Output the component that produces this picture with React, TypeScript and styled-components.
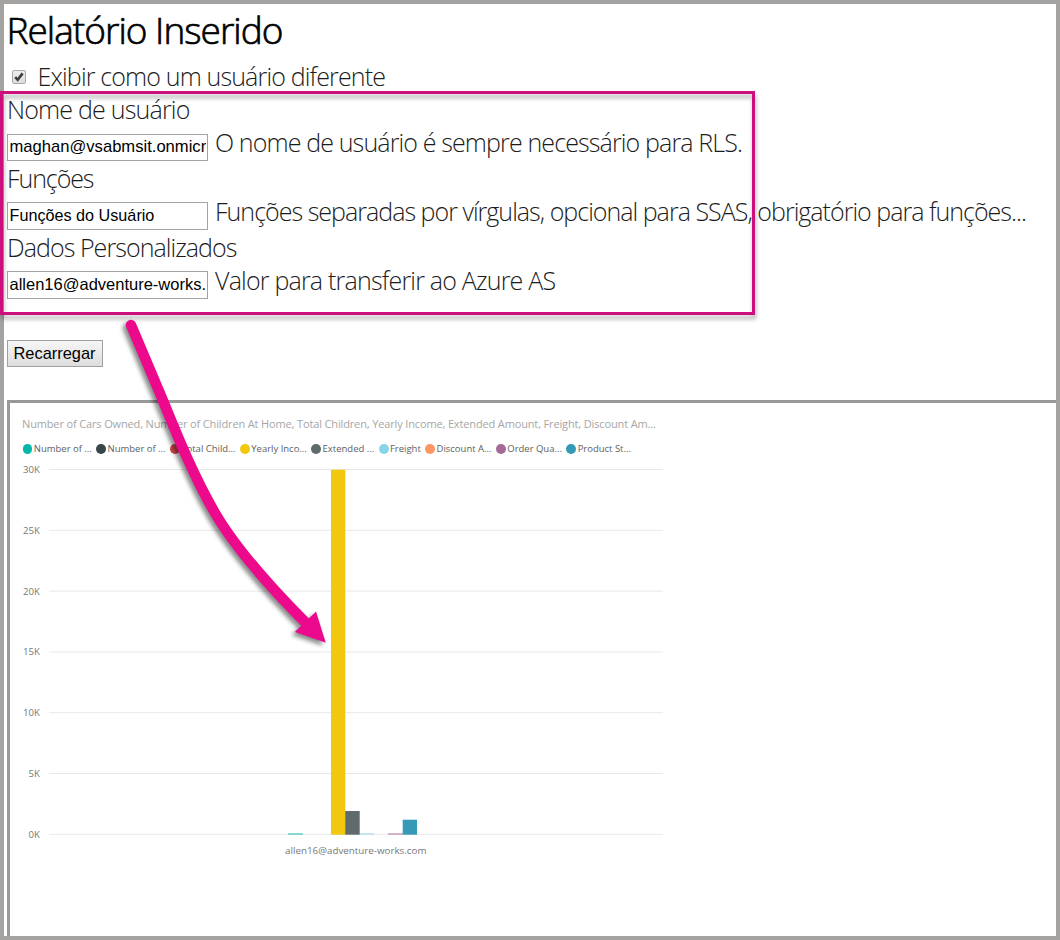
import React from "react";
import styled, { createGlobalStyle } from "styled-components";

const Global = createGlobalStyle`
  *, *::before, *::after { box-sizing: border-box; }
  body { margin: 0; background: #fff; font-family: "Open Sans", sans-serif; }
`;

const Page = styled.main`
  position: relative;
  display: flex;
  flex-direction: column;
  width: 1060px;
  height: 940px;
  padding-left: 3px;
  border: 4px solid #a4a3a2;
  color: #000;
`;

const Title = styled.h1`
  margin: 0 0 0 -0.5px;
  font-size: 37px;
  font-weight: 300;
  line-height: 51px;
  letter-spacing: -0.98px;
  white-space: nowrap;
  -webkit-text-stroke: 0.7px #000;
`;

const Label = styled.span<{ $tracking: number; $line: number }>`
  display: block;
  color: #1c1c1c;
  font-size: 25px;
  font-weight: 300;
  line-height: ${(p) => p.$line}px;
  letter-spacing: ${(p) => p.$tracking}px;
  white-space: nowrap;
`;

const CheckRow = styled.label`
  display: flex;
  align-items: flex-start;
  gap: 11.5px;
  height: 37px;
  padding: 5px 0 0 5px;
`;

const CheckBox = styled.span`
  display: flex;
  width: 14px;
  height: 14px;
  margin-top: 10px;
  border: 1px solid #a9a9a9;
  border-radius: 2px;
  background: linear-gradient(#ededed, #dcdcdc);
`;

const Field = styled.div`
  height: 69px;
`;

const FieldRow = styled.div`
  display: flex;
  align-items: flex-start;
  gap: 7px;
  height: 35px;
`;

const TextInput = styled.input<{ $size: number; $top: number }>`
  flex: none;
  width: 201px;
  height: ${(p) => 35 - p.$top}px;
  margin: ${(p) => p.$top}px 0 0;
  padding: 0 1px 2px 1.5px;
  border: 1px solid #a3a3a3;
  background: #fff;
  color: #000;
  font-family: "Liberation Sans", sans-serif;
  font-size: ${(p) => p.$size}px;
`;

const Reload = styled.button`
  width: 96px;
  height: 27px;
  margin: 41px 0 33px;
  padding: 0 1px 0 0;
  border: 1px solid #a0a0a0;
  border-radius: 0;
  background: linear-gradient(#f6f6f6, #dddddd);
  color: #000;
  font-family: "Liberation Sans", sans-serif;
  font-size: 16.4px;
`;

const ReportFrame = styled.section`
  flex: 1;
  padding: 13px 0 0 12px;
  border: solid #999;
  border-width: 3px 0 0 3px;
`;

const ChartTitle = styled.div`
  height: 16px;
  color: #a6a6a6;
  font-size: 11px;
  line-height: 16px;
  letter-spacing: -0.142px;
  white-space: nowrap;
`;

const Legend = styled.div`
  display: flex;
  gap: 4.6px;
  height: 14px;
  margin: 10px 0 -1px 0.6px;
`;

const LegendItem = styled.span`
  display: flex;
  align-items: center;
  gap: 1.4px;
  color: #5e5e5e;
  font-size: 9.5px;
  line-height: 14px;
  letter-spacing: -0.012px;
  white-space: nowrap;
`;

const Dot = styled.i<{ $color: string }>`
  width: 9.8px;
  height: 9.8px;
  border-radius: 50%;
  background: ${(p) => p.$color};
`;

const Plot = styled.svg`
  display: block;
  width: 650px;
  height: 410px;
  font-family: "Open Sans", sans-serif;
  fill: #777;
`;

const Highlight = styled.div`
  position: absolute;
  top: 87px;
  left: -4px;
  width: 755px;
  height: 224px;
  border: 3px solid #cc0f7d;
  filter: drop-shadow(1px 4px 2px rgba(0, 0, 0, 0.32));
  pointer-events: none;
`;

const Arrow = styled.svg`
  position: absolute;
  top: 306px;
  left: 96px;
  width: 250px;
  height: 350px;
  overflow: visible;
  filter: drop-shadow(-3px 3px 2px rgba(0, 0, 0, 0.45));
  pointer-events: none;
`;

const fields = [
  {
    label: "Nome de usuário", labelTracking: -0.8,
    value: "maghan@vsabmsit.onmicrosoft.com", size: 16.6, top: 8,
    hint: "O nome de usuário é sempre necessário para RLS.", hintTracking: -0.87,
  },
  {
    label: "Funções", labelTracking: -1.08,
    value: "Funções do Usuário", size: 16.2, top: 7,
    hint: "Funções separadas por vírgulas, opcional para SSAS, obrigatório para funções...", hintTracking: -0.98,
  },
  {
    label: "Dados Personalizados", labelTracking: -0.94,
    value: "allen16@adventure-works.com", size: 16.5, top: 7,
    hint: "Valor para transferir ao Azure AS", hintTracking: -0.8,
  },
];

const series = [
  { id: "cars", color: "#01b8aa", name: "Number of ..." },
  { id: "home", color: "#374649", name: "Number of ..." },
  { id: "children", color: "#d04a4a", name: "Total Child..." },
  { id: "income", color: "#f2c80f", name: "Yearly Inco..." },
  { id: "extended", color: "#5f6b6d", name: "Extended ..." },
  { id: "freight", color: "#8ad4eb", name: "Freight" },
  { id: "discount", color: "#fe9666", name: "Discount A..." },
  { id: "order", color: "#a66999", name: "Order Qua..." },
  { id: "product", color: "#3599b8", name: "Product St..." },
];

const ticks = ["30K", "25K", "20K", "15K", "10K", "5K", "0K"];

const bars = [
  { x: 288, w: 15, y: 833.2, color: "#01b8aa", opacity: 0.6 },
  { x: 360, w: 14, y: 833.2, color: "#8ad4eb", opacity: 0.6 },
  { x: 388, w: 15, y: 833.2, color: "#a66999", opacity: 0.6 },
  { x: 331, w: 14.3, y: 469.7, color: "#f2c80f", opacity: 1 },
  { x: 345.2, w: 14.5, y: 811, color: "#5f6b6d", opacity: 1 },
  { x: 402.7, w: 14.3, y: 819.7, color: "#3599b8", opacity: 1 },
];

export default function App() {
  return (
    <>
      <Global />
      <Page>
        <Title>Relatório Inserido</Title>
        <CheckRow>
          <CheckBox>
            <svg width="12" height="12" viewBox="0 0 12 12">
              <path d="M2.2 6.2 4.7 8.8 9.6 2.4" fill="none" stroke="#3c3c3c" strokeWidth="2.6" />
            </svg>
          </CheckBox>
          <Label $tracking={-0.85} $line={32}>Exibir como um usuário diferente</Label>
        </CheckRow>
        {fields.map((f) => (
          <Field key={f.label}>
            <Label $tracking={f.labelTracking} $line={34}>{f.label}</Label>
            <FieldRow>
              <TextInput $size={f.size} $top={f.top} defaultValue={f.value} />
              <Label $tracking={f.hintTracking} $line={33}>{f.hint}</Label>
            </FieldRow>
          </Field>
        ))}
        <Reload>Recarregar</Reload>
        <ReportFrame>
          <ChartTitle>
            Number of Cars Owned, Number of Children At Home, Total Children, Yearly Income, Extended Amount, Freight, Discount Am...
          </ChartTitle>
          <Legend>
            {series.map((s) => (
              <LegendItem key={s.id}>
                <Dot $color={s.color} />
                {s.name}
              </LegendItem>
            ))}
          </Legend>
          <Plot viewBox="22 455 650 410">
            {ticks.map((t, i) => (
              <g key={t}>
                <rect x={49} width={614} y={469 + i * 60.8} height={1} fill="#e8e8e8" />
                <text x={39.9} y={473 + i * 60.8} textAnchor="end" fontSize={9.6}>{t}</text>
              </g>
            ))}
            {bars.map((b) => (
              <rect key={b.x} x={b.x} y={b.y} width={b.w} height={834.7 - b.y} fill={b.color} opacity={b.opacity} />
            ))}
            <text x={355.8} y={854} textAnchor="middle" fontSize={9.8}>allen16@adventure-works.com</text>
          </Plot>
        </ReportFrame>
        <Highlight />
        <Arrow viewBox="100 310 250 350">
          <path
            d="M131 325 L161.5 397 C175 430 192 473 215 513 C235 547 267 584 307 624"
            fill="none" stroke="#ec098c" strokeWidth="10.5" strokeLinecap="round"
          />
          <path d="M325.8 642.8 316 611.5 294.8 632Z" fill="#ec098c" />
        </Arrow>
      </Page>
    </>
  );
}
